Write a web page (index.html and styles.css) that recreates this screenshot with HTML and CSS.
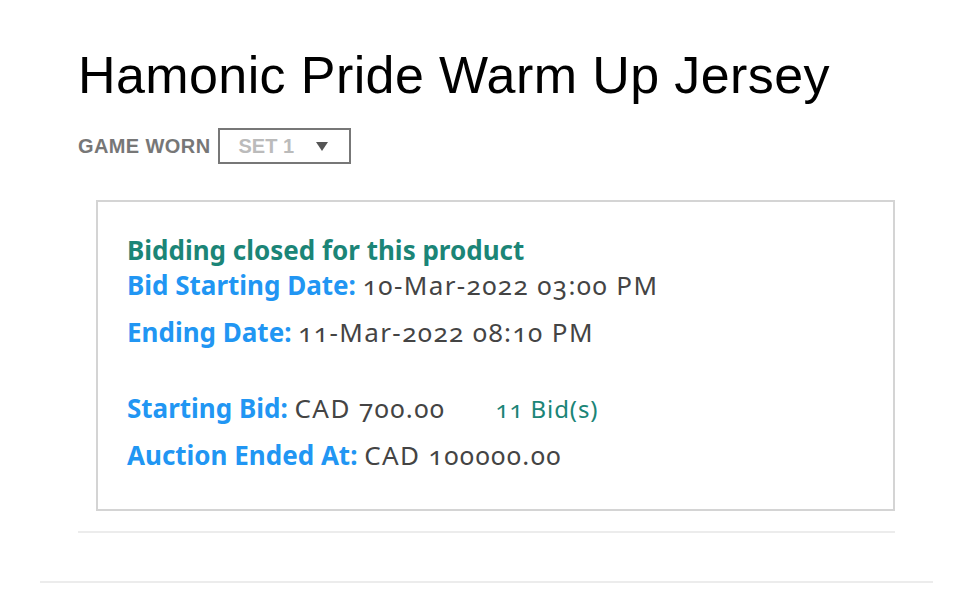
FILE: index.html
```html
<!DOCTYPE html>
<html>
<head>
<meta charset="utf-8">
<link rel="stylesheet" href="styles.css">
</head>
<body>
<div class="page">
  <div class="product">
    <h1 class="title">Hamonic Pride Warm Up Jersey</h1>
    <div class="variant">
      <span class="variant-label">GAME WORN</span>
      <div class="select">
        <span class="select-value">SET 1</span>
        <svg class="caret" width="12" height="9" viewBox="0 0 12 9"><path d="M0 0H12L6 9Z" fill="#555"/></svg>
      </div>
    </div>
    <div class="card">
      <div class="closed">Bidding closed for this product</div>
      <div class="row r1"><span class="lbl">Bid Starting Date:</span> <span class="val">10-Mar-2022 03:00 PM</span></div>
      <div class="row r2"><span class="lbl">Ending Date:</span> <span class="val">11-Mar-2022 08:10 PM</span></div>
      <div class="row r3"><span class="lbl">Starting Bid:</span> <span class="val">CAD 700.00</span><span class="bids">11 Bid(s)</span></div>
      <div class="row r4"><span class="lbl">Auction Ended At:</span> <span class="val">CAD 100000.00</span></div>
    </div>
    <div class="rule inner"></div>
  </div>
  <div class="rule outer"></div>
</div>
</body>
</html>
```
FILE: styles.css
```css
html, body { margin: 0; padding: 0; background: #fff; }
.page { padding: 0 27px 0 40px; }
.product { padding: 0 38px 0 38px; }
.title {
  margin: 0;
  padding-top: 45px;
  font-family: "Liberation Sans", Arial, sans-serif;
  font-weight: 400;
  font-size: 52px;
  line-height: 60px;
  color: #000;
  letter-spacing: 0.4px;
}
.variant {
  display: flex;
  align-items: center;
  margin-top: 23px;
  height: 36px;
}
.variant-label {
  font-family: "Liberation Sans", Arial, sans-serif;
  font-weight: 700;
  font-size: 20px;
  letter-spacing: 0.4px;
  color: #777;
  margin-right: 8px;
}
.select {
  box-sizing: border-box;
  width: 133px;
  height: 36px;
  border: 2px solid #777;
  display: flex;
  align-items: center;
  padding-left: 18px;
}
.select-value {
  font-family: "Liberation Sans", Arial, sans-serif;
  font-weight: 700;
  font-size: 20px;
  color: #bbb;
  width: 78px;
}
.caret { display: block; }
.card {
  margin: 36px 0 20px 18px;
  border: 2px solid #d4d4d4;
  height: 311px;
  box-sizing: border-box;
  padding: 31px 29px 0;
  font-family: "Noto Sans", sans-serif;
  font-variant-numeric: oldstyle-nums;
  font-size: 26px;
}
.closed { color: #1b8577; font-weight: 700; line-height: 35px; }
.row { line-height: 35px; }
.r2 { margin-top: 12px; }
.r3 { margin-top: 41px; }
.r4 { margin-top: 12px; }
.lbl { color: #2196f3; font-weight: 700; }
.val { color: #444; letter-spacing: 1.4px; }
.bids { color: #1b8577; margin-left: 50px; font-size: 24px; letter-spacing: 0.9px; }
.rule { height: 2px; background: #ececec; }
.inner { margin-top: 0; }
.outer { margin-top: 48px; }
```
